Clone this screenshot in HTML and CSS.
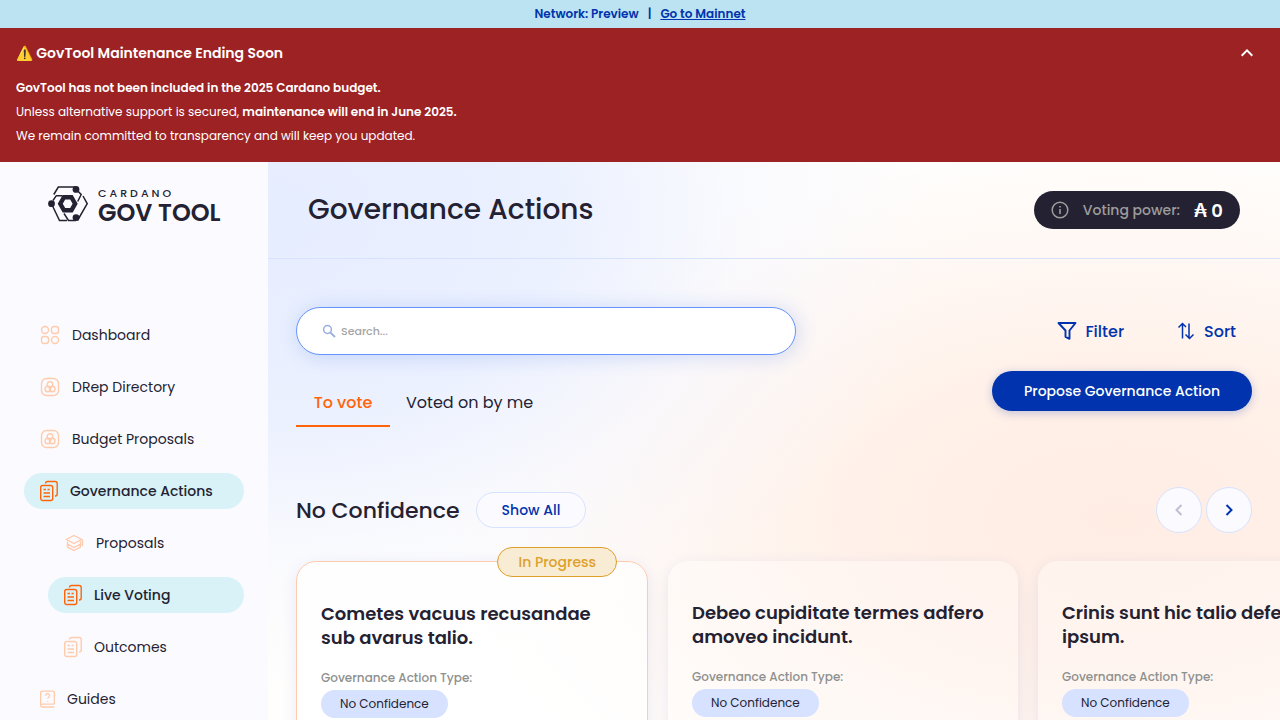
FILE: index.html
```html
<!DOCTYPE html>
<html lang="en">
<head>
<meta charset="utf-8">
<meta name="viewport" content="width=device-width, initial-scale=1">
<title>Governance Actions - GovTool</title>
<link rel="stylesheet" href="styles.css">
</head>
<body>
<svg class="sprite" aria-hidden="true">
  <symbol id="i-dashboard" viewBox="0 0 20 20"><circle cx="5" cy="5" r="3.5"/><rect x="11.5" y="1.5" width="7" height="7" rx="2.5"/><rect x="1.5" y="11.5" width="7" height="7" rx="2.5"/><circle cx="15" cy="15" r="3.5"/></symbol>
  <symbol id="i-drep" viewBox="0 0 20 20"><rect x="1.5" y="1.5" width="17" height="17" rx="5"/><circle cx="10" cy="7.5" r="2.800"/><circle cx="7.800" cy="12" r="2.800"/><circle cx="12.200" cy="12" r="2.800"/></symbol>
  <symbol id="i-docs" viewBox="1 0 18 22"><path d="M6.500 3.500a2 2 0 0 1 2-2h7.700a2 2 0 0 1 2 2v10.500a2 2 0 0 1-2 2H16"/><rect x="1.700" y="5.500" width="12" height="15" rx="2"/><path d="M4.500 9.500h2.500m1.500 0h2.200M4.500 13h6.500M4.500 16.500h6.500"/></symbol>
  <symbol id="i-layers" viewBox="0 0 20 20"><path d="M10 2.500 17.500 6.500l-7.500 4L2.500 6.500zM3.500 8.500v2.500l6.500 3.500 6.500-3.500V8.500M3.500 11v3l6.500 3.500 6.500-3.500v-3M17.500 6.500q1 .5 1 2v4.500"/></symbol>
  <symbol id="i-guide" viewBox="1 1 16 18"><path d="M16.300 15.500V3a1.500 1.500 0 0 0-1.500-1.500H3.700a2 2 0 0 0-2 2v13.500M16.300 15.500H3.200a1.500 1.500 0 0 0 0 3h13.100"/><path d="M6.800 6.500c0-3 4.700-2.700 4.500 0-.1 1.700-2.100 1.700-2.100 3.300M9.200 12v1"/></symbol>
</svg>
<div class="app">
  <div class="network">
    <span>Network: Preview</span><span>|</span><a href="#mainnet">Go to Mainnet</a>
  </div>
  <section class="alert">
    <div class="alert-head">
      <h2>⚠️ GovTool Maintenance Ending Soon</h2>
      <button class="alert-toggle" type="button" aria-label="Collapse notice">
        <svg width="12" height="8" viewBox="0 0 12 8"><path d="M.7 6.700 6 1.400l5.300 5.300" fill="none" stroke="currentColor" stroke-width="2"/></svg>
      </button>
    </div>
    <p><strong>GovTool has not been included in the 2025 Cardano budget.</strong></p>
    <p>Unless alternative support is secured, <strong>maintenance will end in June 2025.</strong></p>
    <p>We remain committed to transparency and will keep you updated.</p>
  </section>
  <div class="shell">
    <aside class="sidebar">
      <a class="logo" href="#home" aria-label="Cardano GovTool">
        <svg width="40" height="36" viewBox="0 0 40 36">
          <g fill="none" stroke="currentColor" stroke-width="1.500">
            <path d="M5.800 8.500 10.300 1H28"/>
            <path d="M5 14.500 8.300 9.700H14.500"/>
            <path d="M28 3.300l5.200 5.200-3.500 7"/>
            <path d="M35 10l4.200 7.700L29.500 34.500"/>
            <path d="M3.500 17.700 11.500 34.500H19"/>
            <path d="M16 27.500l4.500 7H28"/>
          </g>
          <path fill="currentColor" fill-rule="evenodd" d="M14.700 9h10l5 8.700-5 8.700h-10l-5-8.700zM17.200 13.500l-2.400 4.200 2.400 4.200h5l2.400-4.200-2.400-4.200z"/>
          <g fill="currentColor"><circle cx="28" cy="3.400" r="3.400"/><circle cx="3.500" cy="17.700" r="3.400"/><circle cx="28" cy="31.600" r="3.400"/></g>
        </svg>
        <span class="logo-text"><span class="logo-top">CARDANO</span><span class="logo-main">GOV TOOL</span></span>
      </a>
      <nav class="nav">
        <a class="nav-item" href="#dashboard"><svg width="20" height="20"><use href="#i-dashboard"/></svg>Dashboard</a>
        <a class="nav-item" href="#dreps"><svg width="20" height="20"><use href="#i-drep"/></svg>DRep Directory</a>
        <a class="nav-item" href="#budget"><svg width="20" height="20"><use href="#i-drep"/></svg>Budget Proposals</a>
        <a class="nav-item active" href="#actions"><svg width="18" height="22"><use href="#i-docs"/></svg>Governance Actions</a>
        <a class="nav-item sub" href="#proposals"><svg width="20" height="20"><use href="#i-layers"/></svg>Proposals</a>
        <a class="nav-item sub active" href="#live"><svg width="18" height="22"><use href="#i-docs"/></svg>Live Voting</a>
        <a class="nav-item sub" href="#outcomes"><svg width="18" height="22"><use href="#i-docs"/></svg>Outcomes</a>
        <a class="nav-item" href="#guides"><svg width="15" height="18"><use href="#i-guide"/></svg>Guides</a>
      </nav>
    </aside>
    <main class="main">
      <header class="page-head">
        <h1>Governance Actions</h1>
        <div class="power">
          <svg width="18" height="18" viewBox="0 0 18 18"><circle cx="9" cy="9" r="7.800" fill="none" stroke="currentColor" stroke-width="1.500"/><path d="M9 8v5M9 5v1.600" stroke="currentColor" stroke-width="1.600"/></svg>
          <span>Voting power:</span><strong>₳ 0</strong>
        </div>
      </header>
      <div class="content">
        <div class="toolbar">
          <label class="search">
            <svg width="14" height="14" viewBox="0 0 14 14"><circle cx="5.500" cy="5.500" r="3.900" fill="none" stroke="currentColor" stroke-width="1.500"/><path d="M8.300 8.300 13 13" stroke="currentColor" stroke-width="1.800"/></svg>
            <input type="search" placeholder="Search..." aria-label="Search">
          </label>
          <div class="tools">
            <button class="tool" type="button"><svg width="20" height="20" viewBox="0 0 20 20"><path d="M1.500 2h17L12.500 9.500v8.300l-4-2V9.500z" fill="none" stroke="currentColor" stroke-width="1.900" stroke-linejoin="round"/></svg>Filter</button>
            <button class="tool" type="button"><svg width="20" height="20" viewBox="0 0 20 20"><path d="M6.500 17.500V3M2.500 6.500 6.500 2.500 10 6M13 2.500v15M9.500 13.500 13.500 17.500 17.500 13.500" fill="none" stroke="currentColor" stroke-width="1.500"/></svg>Sort</button>
          </div>
        </div>
        <div class="tabs-row">
          <div class="tabs" role="tablist">
            <button class="tab selected" type="button" role="tab" aria-selected="true">To vote</button>
            <button class="tab" type="button" role="tab" aria-selected="false">Voted on by me</button>
          </div>
          <button class="propose" type="button">Propose Governance Action</button>
        </div>
        <section class="group">
          <div class="group-head">
            <h2>No Confidence</h2>
            <button class="show-all" type="button">Show All</button>
            <div class="arrows">
              <button class="arrow" type="button" aria-label="Previous" disabled><svg width="8" height="12" viewBox="0 0 8 12"><path d="M6.500 1l-5 5 5 5" fill="none" stroke="currentColor" stroke-width="2"/></svg></button>
              <button class="arrow" type="button" aria-label="Next"><svg width="8" height="12" viewBox="0 0 8 12"><path d="M1.500 1l5 5-5 5" fill="none" stroke="currentColor" stroke-width="2"/></svg></button>
            </div>
          </div>
          <div class="cards">
            <article class="card in-progress">
              <span class="badge">In Progress</span>
              <h3>Cometes vacuus recusandae sub avarus talio.</h3>
              <p class="label">Governance Action Type:</p>
              <span class="chip">No Confidence</span>
            </article>
            <article class="card">
              <h3>Debeo cupiditate termes adfero amoveo incidunt.</h3>
              <p class="label">Governance Action Type:</p>
              <span class="chip">No Confidence</span>
            </article>
            <article class="card">
              <h3>Crinis sunt hic talio defero ipsum.</h3>
              <p class="label">Governance Action Type:</p>
              <span class="chip">No Confidence</span>
            </article>
          </div>
        </section>
      </div>
    </main>
  </div>
</div>
</body>
</html>
```
FILE: styles.css
```css
:root {
  --ink: #242232;
  --blue: #0033ad;
  --orange: #ff640a;
  --peach: #ffcbad;
  --line: #d6e2ff;
  --paper: #fbfbff;
}

* { box-sizing: border-box; }

body {
  margin: 0;
  color: var(--ink);
  font-family: Poppins, Inter, "Open Sans", sans-serif;
  font-size: 14px;
}

h1, h2, h3, p { margin: 0; }
a { color: inherit; text-decoration: none; }
button, input { font: inherit; color: inherit; }
button { padding: 0; border: 0; background: none; cursor: pointer; }
svg { flex: none; display: block; }
.sprite { position: absolute; width: 0; height: 0; }

.app {
  display: flex;
  flex-direction: column;
  height: 100vh;
  overflow: hidden;
}

.network {
  display: flex;
  justify-content: center;
  gap: 9px;
  background: #bbe3f1;
  color: var(--blue);
  font-size: 12px;
  font-weight: 600;
  line-height: 28px;
}
.network a { text-decoration: underline; }

.alert {
  padding: 11px 16px 14px;
  background: #9c2224;
  color: #fff;
  font-size: 12px;
  line-height: 24px;
}
.alert-head {
  display: flex;
  align-items: center;
  justify-content: space-between;
  margin-bottom: 9px;
}
.alert h2 { font-size: 14px; font-weight: 600; line-height: 28px; }
.alert strong { font-weight: 600; }
.alert-toggle { display: grid; place-items: center; width: 34px; height: 28px; }

.shell {
  flex: 1;
  display: grid;
  grid-template-columns: 268px minmax(0, 1fr);
  min-height: 0;
}

.sidebar { overflow: hidden; padding: 24px; background: var(--paper); }
.logo { display: flex; gap: 10px; height: 36px; margin-left: 24px; }
.logo-text { display: flex; flex-direction: column; }
.logo-top { font-size: 11px; font-weight: 500; line-height: 14px; letter-spacing: 3px; }
.logo-main { font-size: 24px; font-weight: 600; line-height: 25px; white-space: nowrap; }

.nav { display: flex; flex-direction: column; gap: 16px; margin-top: 95px; }
.nav-item {
  display: flex;
  align-items: center;
  gap: 12px;
  height: 36px;
  padding-left: 16px;
  border-radius: 18px;
  white-space: nowrap;
}
.nav-item svg {
  fill: none;
  stroke: var(--peach);
  stroke-width: 1.4px;
}
.nav-item.sub { margin-left: 24px; }
.nav-item.active { background: #d8f2f7; font-weight: 500; }
.nav-item.active svg { stroke: var(--orange); }

.main {
  overflow: hidden;
  background:
    radial-gradient(ellipse 66% 85% at 0% 10%, #e6edff 0%, #e9efffe6 42%, #f4f6ff80 70%, #ffffff00 100%),
    radial-gradient(ellipse 66% 68% at 84% 64%, #ffede4 0%, #fff0e8 35%, #fff9f500 100%),
    #fffefd;
}

.page-head {
  display: flex;
  align-items: center;
  justify-content: space-between;
  height: 97px;
  padding: 0 40px;
  border-bottom: 1px solid var(--line);
}
.page-head h1 { font-size: 28px; font-weight: 500; }
.power {
  display: flex;
  align-items: center;
  gap: 14px;
  height: 38px;
  padding: 0 17px;
  border-radius: 19px;
  background: var(--ink);
  color: #9d9d9d;
  font-weight: 500;
}
.power strong { color: #fff; font-size: 18px; font-weight: 600; }

.content { padding: 48px 28px 0; }
.toolbar, .tabs-row { display: flex; justify-content: space-between; }

.search {
  display: flex;
  align-items: center;
  gap: 5px;
  width: 500px;
  height: 48px;
  padding: 0 25px;
  border: 1px solid #6694ff;
  border-radius: 24px;
  background: #fff;
  box-shadow: 2px 2px 20px rgba(47, 98, 220, 0.2);
  color: #99adde;
}
.search input {
  flex: 1;
  min-width: 0;
  padding: 0;
  border: 0;
  outline: 0;
  background: none;
  color: var(--ink);
  font-size: 11px;
  font-weight: 500;
}
.search input::placeholder { color: #a5a5a5; opacity: 1; }

.tools { display: flex; gap: 52px; padding-right: 16px; }
.tool {
  display: flex;
  align-items: center;
  gap: 8px;
  color: var(--blue);
  font-size: 16px;
  font-weight: 500;
}

.tabs-row { align-items: flex-start; margin-top: 16px; }
.tabs { display: flex; margin-top: 8px; }
.tab {
  min-width: 94px;
  height: 48px;
  padding: 0 16px;
  border-bottom: 2px solid transparent;
  font-size: 16px;
}
.tab.selected { border-color: var(--orange); color: var(--orange); font-weight: 500; }
.propose {
  height: 40px;
  padding: 0 32px;
  border-radius: 20px;
  background: var(--blue);
  box-shadow: 0 2px 10px rgba(0, 51, 173, 0.25);
  color: #fff;
  font-weight: 500;
}

.group { margin-top: 60px; }
.group-head { display: flex; align-items: center; gap: 16px; }
.group-head h2 { font-size: 22px; font-weight: 500; }
.show-all {
  height: 36px;
  padding: 0 25px;
  border: 1px solid var(--line);
  border-radius: 18px;
  background: var(--paper);
  color: var(--blue);
  font-weight: 500;
}
.arrows { display: flex; gap: 4px; margin-left: auto; }
.arrow {
  display: grid;
  place-items: center;
  width: 46px;
  height: 46px;
  border: 1px solid var(--line);
  border-radius: 50%;
  background: var(--paper);
  color: var(--blue);
}
.arrow:disabled { color: #c1bed3; }

.cards { display: flex; gap: 20px; margin-top: 28px; }
.card {
  position: relative;
  box-sizing: content-box;
  flex: none;
  width: 302px;
  min-height: 300px;
  padding: 40px 24px;
  border-radius: 20px;
  background: rgba(255, 255, 255, 0.3);
  box-shadow: 0 4px 15px rgba(47, 70, 200, 0.1);
}
.card.in-progress { border: 1px solid var(--peach); background: rgba(255, 255, 255, 0.7); }
.card h3 { font-size: 18px; font-weight: 600; line-height: 24px; }
.label {
  margin: 20px 0 4px;
  color: #8e908e;
  font-size: 12px;
  font-weight: 500;
  line-height: 16px;
}
.chip {
  display: inline-block;
  padding: 0 19px;
  border-radius: 14px;
  background: var(--line);
  font-size: 12px;
  line-height: 28px;
}
.badge {
  position: absolute;
  top: -15px;
  right: 30px;
  padding: 0 20px;
  border: 1px solid #dea029;
  border-radius: 15px;
  background: #f8ecd4;
  color: #dea029;
  font-weight: 500;
  line-height: 28px;
}
```
